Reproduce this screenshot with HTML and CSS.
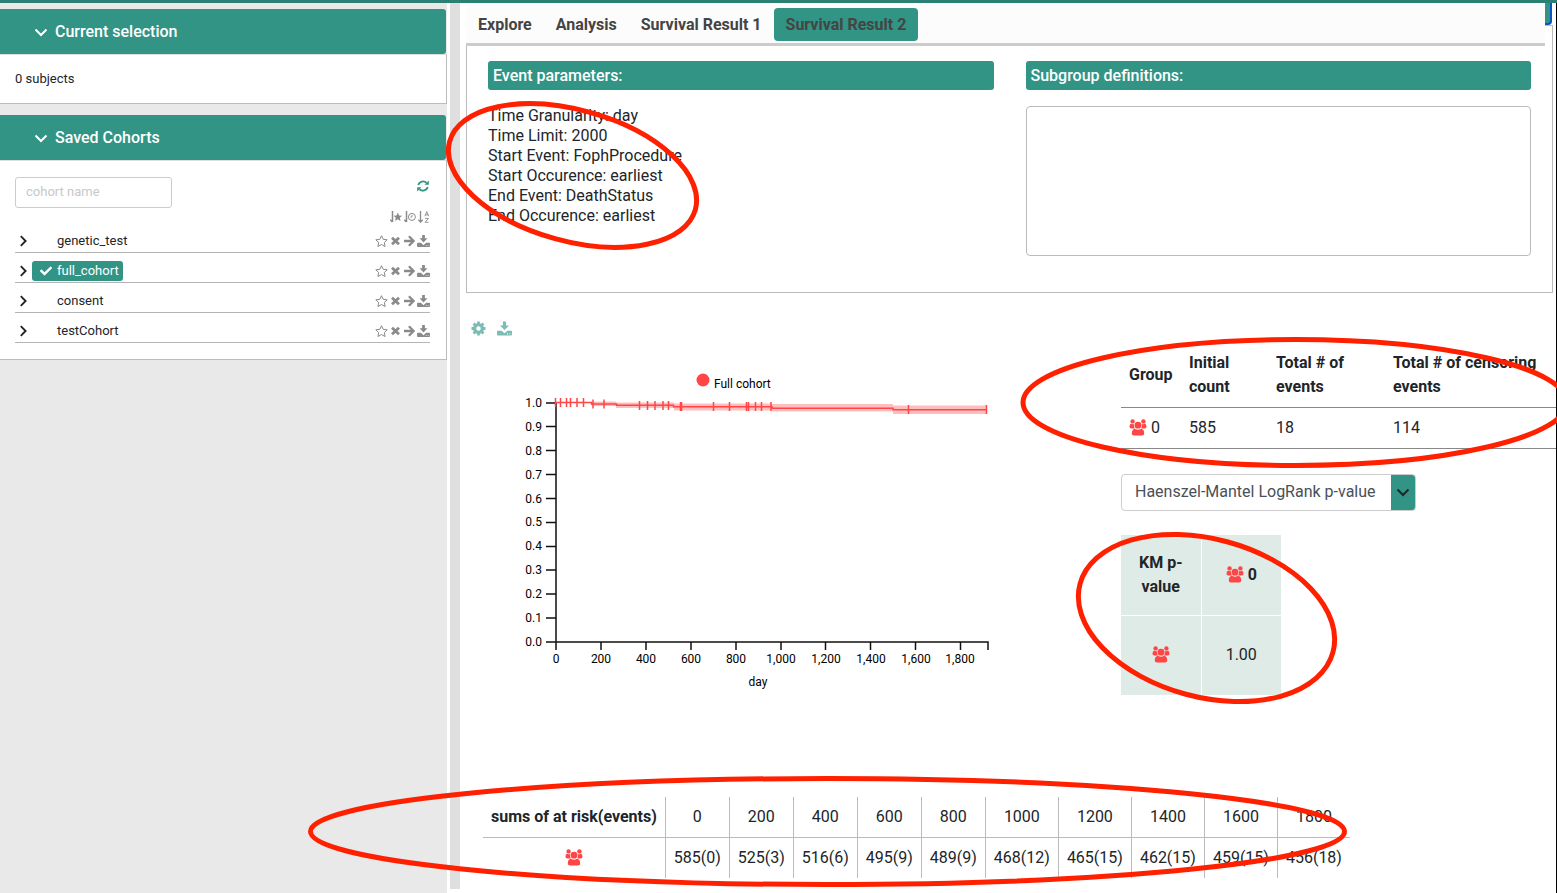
FILE: index.html
```html
<!doctype html>
<html lang="en">
<head>
    <meta charset="utf-8">
    <title>Survival Result 2</title>
    <link rel="stylesheet" href="styles.css">
</head>
<body>
<!-- icons -->
<svg class="sprite" aria-hidden="true">
    <symbol id="i-down" viewBox="0 0 14 14"><path d="M1.5 4.5 7 10l5.5-5.5" fill="none" stroke="currentColor" stroke-width="2"/></symbol>
    <symbol id="i-right" viewBox="0 0 12 12"><path d="M3.800 1.2 8.600 6l-4.800 4.8" fill="none" stroke="currentColor" stroke-width="1.9"/></symbol>
    <symbol id="i-check" viewBox="0 0 512 512"><path fill="currentColor" d="M173.898 439.404l-166.4-166.4c-9.997-9.997-9.997-26.206 0-36.204l36.203-36.204c9.997-9.998 26.207-9.998 36.204 0L192 312.69 432.095 72.596c9.997-9.997 26.207-9.997 36.204 0l36.203 36.204c9.997 9.997 9.997 26.206 0 36.204l-294.4 294.401c-9.998 9.997-26.207 9.997-36.204-.001z"/></symbol>
    <symbol id="i-refresh" viewBox="0 0 12 12"><path d="M1.2 5a5 5 0 0 1 8.3-2.2M10.8 7a5 5 0 0 1-8.3 2.2" fill="none" stroke="currentColor" stroke-width="1.9"/><path d="M11.8.6v4.2H7.6zM.2 11.4V7.2h4.2z" fill="currentColor"/></symbol>
    <symbol id="i-star" viewBox="0 0 13 12"><path d="M6.5.7 8.2 4.3l4 .5-2.9 2.7.8 4-3.6-2-3.6 2 .8-4L.8 4.800l4-.5z" fill="none" stroke="currentColor"/></symbol>
    <symbol id="i-times" viewBox="0 0 10 10"><path d="M1.5 1.8l7 6.4M8.5 1.8l-7 6.4" fill="none" stroke="currentColor" stroke-width="2.8"/></symbol>
    <symbol id="i-arrow" viewBox="0 0 12 12"><path d="M.5 6h9M5.4 1.3 10.1 6l-4.7 4.7" fill="none" stroke="currentColor" stroke-width="2.3"/></symbol>
    <symbol id="i-download" viewBox="0 0 14 13"><path fill="currentColor" d="M5.500 0h3v3.600h2.800L7 8 2.700 3.600h2.800z"/><path fill="currentColor" fill-rule="evenodd" d="M0 9.3q0-.8.8-.8h3.400L7 11l2.800-2.500h3.400q.8 0 .8.8v2.9q0 .8-.8.8H.8q-.8 0-.8-.8zM9.400 11v.9h.9V11zM11.600 11v.9h.9V11z"/></symbol>
    <symbol id="i-sort-star" viewBox="0 0 12 12"><path d="M2.5 0v11M.3 8.7l2.2 2.4" fill="none" stroke="currentColor" stroke-width="1.5"/><path fill="currentColor" d="M7.8 1.500l1.300 2.900 3 .3-2.300 2.100.7 3.100-2.700-1.600-2.700 1.600.7-3.100-2.200-2.100 2.900-.3z"/></symbol>
    <symbol id="i-sort-time" viewBox="0 0 12 12"><path d="M2.5 0v11M.3 8.7l2.2 2.4" fill="none" stroke="currentColor" stroke-width="1.5"/><circle cx="7.9" cy="5.9" r="3.5" fill="none" stroke="currentColor"/><path d="M8 3.8V6H6.3" fill="none" stroke="currentColor" stroke-width=".9"/></symbol>
    <symbol id="i-sort-name" viewBox="0 0 12 12"><path d="M2.5 0v11M.3 8.7l2.2 2.4 2.2-2.4" fill="none" stroke="currentColor" stroke-width="1.3"/><path d="M6.9 5.2 8.8.6l1.9 4.6M7.5 3.8h2.6M7.1 7.4h3.3l-3.3 3.9h3.5" fill="none" stroke="currentColor" stroke-width=".9"/></symbol>
    <symbol id="i-gear" viewBox="0 0 14 14"><circle cx="7" cy="7" r="3.6" fill="none" stroke="currentColor" stroke-width="3"/><path d="M7 .5v3M7 10.500v3M.5 7h3M10.500 7h3M2.4 2.4l2 2M9.600 9.600l2 2M2.4 11.600l2-2M9.600 4.400l2-2" fill="none" stroke="currentColor" stroke-width="2.6"/></symbol>
    <symbol id="i-users" viewBox="0 0 18 17"><g fill="currentColor"><circle cx="3.6" cy="2.4" r="2.2"/><circle cx="14.4" cy="2.4" r="2.2"/><path d="M1.9 4.800q1.700.8 3.200.2-.8 2.600.7 4.400H2.200Q.5 9.400.5 7.800q0-2.700 1.400-3zM16.100 4.800q-1.700.8-3.200.2.8 2.600-.7 4.400h3.600q1.700 0 1.700-1.600 0-2.700-1.400-3z"/><circle cx="9" cy="6.200" r="3.400"/><path d="M5.900 9.800q3.100 1.800 6.200 0 3.100.4 3.100 4.700 0 2.100-2.200 2.100H5q-2.200 0-2.200-2.100 0-4.300 3.100-4.700z"/></g></symbol>
</svg>

<div class="top-bar"></div>
<div class="layout">
    <aside class="sidebar">
        <section class="card">
            <button class="card-title"><svg><use href="#i-down"/></svg>Current selection</button>
            <div class="card-body">0 subjects</div>
        </section>
        <section class="card">
            <button class="card-title"><svg><use href="#i-down"/></svg>Saved Cohorts</button>
            <div class="card-body saved">
                <div class="search">
                    <input type="text" class="cohort-name" placeholder="cohort name" aria-label="cohort name">
                    <button class="refresh" aria-label="Refresh"><svg><use href="#i-refresh"/></svg></button>
                </div>
                <div class="sorts">
                    <button aria-label="Sort by bookmark"><svg><use href="#i-sort-star"/></svg></button>
                    <button aria-label="Sort by date"><svg><use href="#i-sort-time"/></svg></button>
                    <button aria-label="Sort by name"><svg><use href="#i-sort-name"/></svg></button>
                </div>
                <ul class="cohorts">
                    <li>
                        <button class="expand" aria-label="Expand"><svg><use href="#i-right"/></svg></button>
                        <button class="cohort">genetic_test</button>
                        <span class="actions">
                            <button aria-label="Bookmark"><svg><use href="#i-star"/></svg></button>
                            <button aria-label="Delete"><svg class="small"><use href="#i-times"/></svg></button>
                            <button aria-label="Restore"><svg><use href="#i-arrow"/></svg></button>
                            <button aria-label="Download"><svg><use href="#i-download"/></svg></button>
                        </span>
                    </li>
                    <li>
                        <button class="expand" aria-label="Expand"><svg><use href="#i-right"/></svg></button>
                        <button class="cohort selected"><svg><use href="#i-check"/></svg>full_cohort</button>
                        <span class="actions">
                            <button aria-label="Bookmark"><svg><use href="#i-star"/></svg></button>
                            <button aria-label="Delete"><svg class="small"><use href="#i-times"/></svg></button>
                            <button aria-label="Restore"><svg><use href="#i-arrow"/></svg></button>
                            <button aria-label="Download"><svg><use href="#i-download"/></svg></button>
                        </span>
                    </li>
                    <li>
                        <button class="expand" aria-label="Expand"><svg><use href="#i-right"/></svg></button>
                        <button class="cohort">consent</button>
                        <span class="actions">
                            <button aria-label="Bookmark"><svg><use href="#i-star"/></svg></button>
                            <button aria-label="Delete"><svg class="small"><use href="#i-times"/></svg></button>
                            <button aria-label="Restore"><svg><use href="#i-arrow"/></svg></button>
                            <button aria-label="Download"><svg><use href="#i-download"/></svg></button>
                        </span>
                    </li>
                    <li>
                        <button class="expand" aria-label="Expand"><svg><use href="#i-right"/></svg></button>
                        <button class="cohort">testCohort</button>
                        <span class="actions">
                            <button aria-label="Bookmark"><svg><use href="#i-star"/></svg></button>
                            <button aria-label="Delete"><svg class="small"><use href="#i-times"/></svg></button>
                            <button aria-label="Restore"><svg><use href="#i-arrow"/></svg></button>
                            <button aria-label="Download"><svg><use href="#i-download"/></svg></button>
                        </span>
                    </li>
                </ul>
            </div>
        </section>
    </aside>
    <div class="gutter"></div>

    <main class="main">
        <button class="run" aria-label="Run"></button>
        <nav class="tabs">
            <a href="#">Explore</a>
            <a href="#">Analysis</a>
            <a href="#">Survival Result 1</a>
            <a href="#" class="active">Survival Result 2</a>
        </nav>

        <section class="params">
            <div>
                <h2>Event parameters:</h2>
                <p>
                    Time Granularity: day<br>
                    Time Limit: 2000<br>
                    Start Event: FophProcedure<br>
                    Start Occurence: earliest<br>
                    End Event: DeathStatus<br>
                    End Occurence: earliest
                </p>
            </div>
            <div>
                <h2><label for="subgroups">Subgroup definitions:</label></h2>
                <textarea id="subgroups" readonly></textarea>
            </div>
        </section>

        <div class="tools">
            <button aria-label="Settings"><svg><use href="#i-gear"/></svg></button>
            <button aria-label="Download"><svg><use href="#i-download"/></svg></button>
        </div>

        <div class="results">
            <svg class="chart" width="560" height="360">
                <g transform="translate(90,59)">
                    <circle class="dot" cx="147" cy="-22" r="6.5"/>
                    <text x="158" y="-14">Full cohort</text>
                    <path class="axis" d="M-10 1H0V240H-10M0 248V240H432V248"/>
                    <path class="axis" d="M-10 24.5H0M-10 48.5H0M-10 72.5H0M-10 96.5H0M-10 120.5H0M-10 144.5H0M-10 168H0M-10 192H0M-10 216H0"/>
                    <path class="axis" d="M45 240v8M90 240v8M135 240v8M180 240v8M225 240v8M269.500 240v8M314.500 240v8M359.500 240v8M404.500 240v8"/>
                    <g class="y-labels">
                        <text x="-14" y="5">1.0</text>
                        <text x="-14" y="29">0.9</text>
                        <text x="-14" y="53">0.8</text>
                        <text x="-14" y="77">0.7</text>
                        <text x="-14" y="101">0.6</text>
                        <text x="-14" y="124">0.5</text>
                        <text x="-14" y="148">0.4</text>
                        <text x="-14" y="172">0.3</text>
                        <text x="-14" y="196">0.2</text>
                        <text x="-14" y="220">0.1</text>
                        <text x="-14" y="244">0.0</text>
                    </g>
                    <g class="x-labels">
                        <text x="0" y="261">0</text>
                        <text x="45" y="261">200</text>
                        <text x="90" y="261">400</text>
                        <text x="135" y="261">600</text>
                        <text x="180" y="261">800</text>
                        <text x="225" y="261">1,000</text>
                        <text x="270" y="261">1,200</text>
                        <text x="315" y="261">1,400</text>
                        <text x="360" y="261">1,600</text>
                        <text x="404" y="261">1,800</text>
                        <text x="202" y="284">day</text>
                    </g>
                    <!-- confidence band, curve, censoring marks -->
                    <path class="band" d="M0 0H35.500V-.5H60V.5H118V1.500H216V2H337V3.500H431V12H337V9.500H216V8.500H118V6H60V4H35.500V1H0z"/>
                    <path class="curve" d="M0 .5H35.500V2H60.500V3.300H117.500V4.700H216V6.200H337V7.700H431"/>
                    <path class="marks" d="M-.5-4v9M4.500-4v9M10.500-4v9M14.500-4v9M21-4v9M27.500-4v9M37-2.500v9M48-2.500v9M83.500-1v9M91.500-1v9M99-1v9M107-1v9M112.500-1v9M124.500 0v9M125.500 0v9M157.500 0v9M173.500 0v9M190.500 0v9M192.500 0v9M199.500 0v9M205.500 0v9M215 0v9M352.500 3v9M430.500 3v9"/>
                </g>
            </svg>

            <div class="stats">
                <table class="summary">
                    <thead>
                        <tr><th>Group</th><th>Initial count</th><th>Total # of events</th><th>Total # of censoring events</th></tr>
                    </thead>
                    <tbody>
                        <tr><td><svg class="users"><use href="#i-users"/></svg> 0</td><td>585</td><td>18</td><td>114</td></tr>
                    </tbody>
                </table>
                <div class="select">
                    <select aria-label="p-value test"><option>Haenszel-Mantel LogRank p-value</option></select>
                    <svg><use href="#i-down"/></svg>
                </div>
                <table class="pvalues">
                    <tr><th>KM p-value</th><th><svg class="users"><use href="#i-users"/></svg> 0</th></tr>
                    <tr><td><svg class="users"><use href="#i-users"/></svg></td><td>1.00</td></tr>
                </table>
            </div>
        </div>

        <table class="risk">
            <tr><th>sums of at risk(events)</th><td>0</td><td>200</td><td>400</td><td>600</td><td>800</td><td>1000</td><td>1200</td><td>1400</td><td>1600</td><td>1800</td></tr>
            <tr><td><svg class="users"><use href="#i-users"/></svg></td><td>585(0)</td><td>525(3)</td><td>516(6)</td><td>495(9)</td><td>489(9)</td><td>468(12)</td><td>465(15)</td><td>462(15)</td><td>459(15)</td><td>456(18)</td></tr>
        </table>
    </main>
</div>

<!-- red circles over the page -->
<svg class="marker" aria-hidden="true">
    <ellipse cx="572.500" cy="175.500" rx="127.500" ry="65.500" transform="rotate(15.500 572.500 175.500)"/>
    <ellipse cx="1295" cy="402.500" rx="272" ry="63"/>
    <ellipse cx="1206.500" cy="618" rx="131" ry="79" transform="rotate(15.100 1206.500 618)"/>
    <ellipse cx="827.500" cy="831.500" rx="517" ry="53"/>
</svg>
</body>
</html>
```
FILE: styles.css
```css
*{box-sizing:border-box;}
body{margin:0; min-height:100vh; display:flex; flex-direction:column; overflow:hidden; background:#fff; color:#212529; font:16px/24px Roboto, "Liberation Sans", sans-serif;}
button{margin:0; padding:0; border:0; background:none; color:inherit; font:inherit; display:flex; align-items:center;}
svg{display:block; flex:none;}
table{border-collapse:collapse;}
.sprite{position:absolute; width:0; height:0;}

.top-bar{height:3px; background:#2b8073;}
.layout{flex:1; display:flex; border-right:1px solid #000;}

/* sidebar */
.sidebar{flex:0 0 447px; padding-top:6px; background:#e9e9e9; font-size:13px; line-height:20px;}
.card{margin-bottom:11px;}
.card-title{width:calc(100% - 1px); height:45px; padding-left:34px; gap:7px; background:#319485; color:#fff; font-size:16px; font-weight:500; border-radius:0 3px 3px 0;}
.card-title svg{width:14px; height:14px;}
.card-body{padding:14px 16px 14px 15px; background:#fff; border:solid #bbb; border-width:1px 1px 1px 0; border-top-color:#ddd;}
.saved{padding:16px 16px 16px 15px;}
.search{display:flex; justify-content:space-between; align-items:flex-start;}
.cohort-name{width:157px; height:31px; padding:0 10px 2px; border:1px solid #ccc; border-radius:3px; font:13px/20px Roboto, sans-serif; color:#495057;}
.cohort-name::placeholder{color:#c8c8c8;}
.refresh{padding:3px 1px; color:#319485;}
.refresh svg{width:12px; height:12px;}
.sorts{display:flex; justify-content:flex-end; gap:2px; padding-top:3px; color:#8a8a8a;}
.sorts svg{width:12px; height:12px;}
.cohorts{list-style:none; margin:0; padding:0;}
.cohorts li{display:flex; align-items:flex-end; height:30px; padding-bottom:1px; border-bottom:1px solid #b5b5b5;}
.expand{width:17px; height:20px; padding-left:2px;}
.expand svg{width:12px; height:12px;}
.cohort{height:20px; padding:0 4px 0 25px; border-radius:3px;}
.selected{padding-left:8px; gap:5px; background:#319485; color:#fff;}
.selected svg{width:12px; height:12px;}
.actions{display:flex; gap:1px; margin-left:auto; color:#8a8a8a;}
.actions button{height:20px;}
.actions svg{width:13px; height:12px;}
.actions .small{height:10px;}
.gutter{flex:0 0 10px; margin:0 0 4px 3px; background:#dfdfdf;}

/* main */
.main{flex:1; min-width:0; position:relative; padding-left:6px;}
.run{position:absolute; top:0; right:4px; width:40px; height:22px; background:#319485; border:solid #0b55c4; border-width:0 2px 2px 0; border-radius:0 0 4px 0;}
.tabs{position:relative; z-index:1; display:flex; margin-right:11px; padding:5px 0 2px; background:#fcfcfc; border-bottom:3px solid #ccc;}
.tabs a{padding:0 12px; color:#444; font-weight:700; line-height:33px; text-decoration:none; border-radius:4px;}
.tabs .active{background:#319485;}
.params{display:grid; grid-template-columns:1fr 1fr; gap:32px; margin:-21px 3px 0 0; padding:35px 21px 36px; border:1px solid #bbb;}
.params h2{margin:0 0 16px; padding:0 5px; background:#319485; color:#fff; font-size:16px; font-weight:500; line-height:29px; border-radius:3px;}
.params p{margin:0; line-height:20px;}
.params textarea{display:block; width:100%; height:150px; background:#fff; border:1px solid #bbb; border-radius:4px; resize:none;}
.tools{display:flex; gap:11px; padding:28px 0 0 5px; color:#7abdb5;}
.tools svg{width:15px; height:15px;}
.results{display:grid; grid-template-columns:3fr 2fr; margin-top:7px;}
.chart{font-size:12px;}
.chart text{fill:#000;}
.dot{fill:#ff4545;}
.axis{fill:none; stroke:#111; stroke-width:1.5;}
.y-labels{text-anchor:end;}
.x-labels{text-anchor:middle;}
.band{fill:#ff4545; opacity:.35;}
.curve,.marks{fill:none; stroke:#ff4545; stroke-width:1.5;}

.stats{padding-left:1px;}
.users{display:inline-block; width:18px; height:17px; vertical-align:-3px; color:#ff4545;}
.summary{width:100%;}
.summary th,.summary td{padding:8px; text-align:left; border-bottom:1px solid #888;}
.summary th:nth-child(1){width:60px;}
.summary th:nth-child(2){width:87px;}
.summary th:nth-child(3){width:117px;}
.select{position:relative; width:295px; margin:25px 0 24px;}
.select select{appearance:none; display:block; width:100%; height:37px; padding:0 24px 1px 13px; border:1px solid #ccc; border-radius:4px; background:linear-gradient(#319485,#319485) right/24px 100% no-repeat #fff; color:#495057; font:16px/24px Roboto, sans-serif;}
.select svg{position:absolute; right:6px; top:11px; width:14px; height:14px; pointer-events:none;}
.pvalues{background:#deebe6; text-align:center;}
.pvalues th,.pvalues td{width:80px; height:80px; padding:8px;}
.pvalues th+th,.pvalues td+td{border-left:1px solid #fff;}
.pvalues td{border-top:1px solid #fff;}
.risk{margin:94px 0 0 17px; text-align:center;}
.risk th,.risk td{padding:8px; white-space:nowrap; border-left:1px solid #bbb;}
.risk th:first-child,.risk td:first-child{border-left:0;}
.risk tr+tr td{border-top:1px solid #bbb;}

.marker{position:absolute; top:0; left:0; width:100%; height:100%; pointer-events:none; z-index:2;}
.marker ellipse{fill:none; stroke:#ff2000; stroke-width:5;}
```
